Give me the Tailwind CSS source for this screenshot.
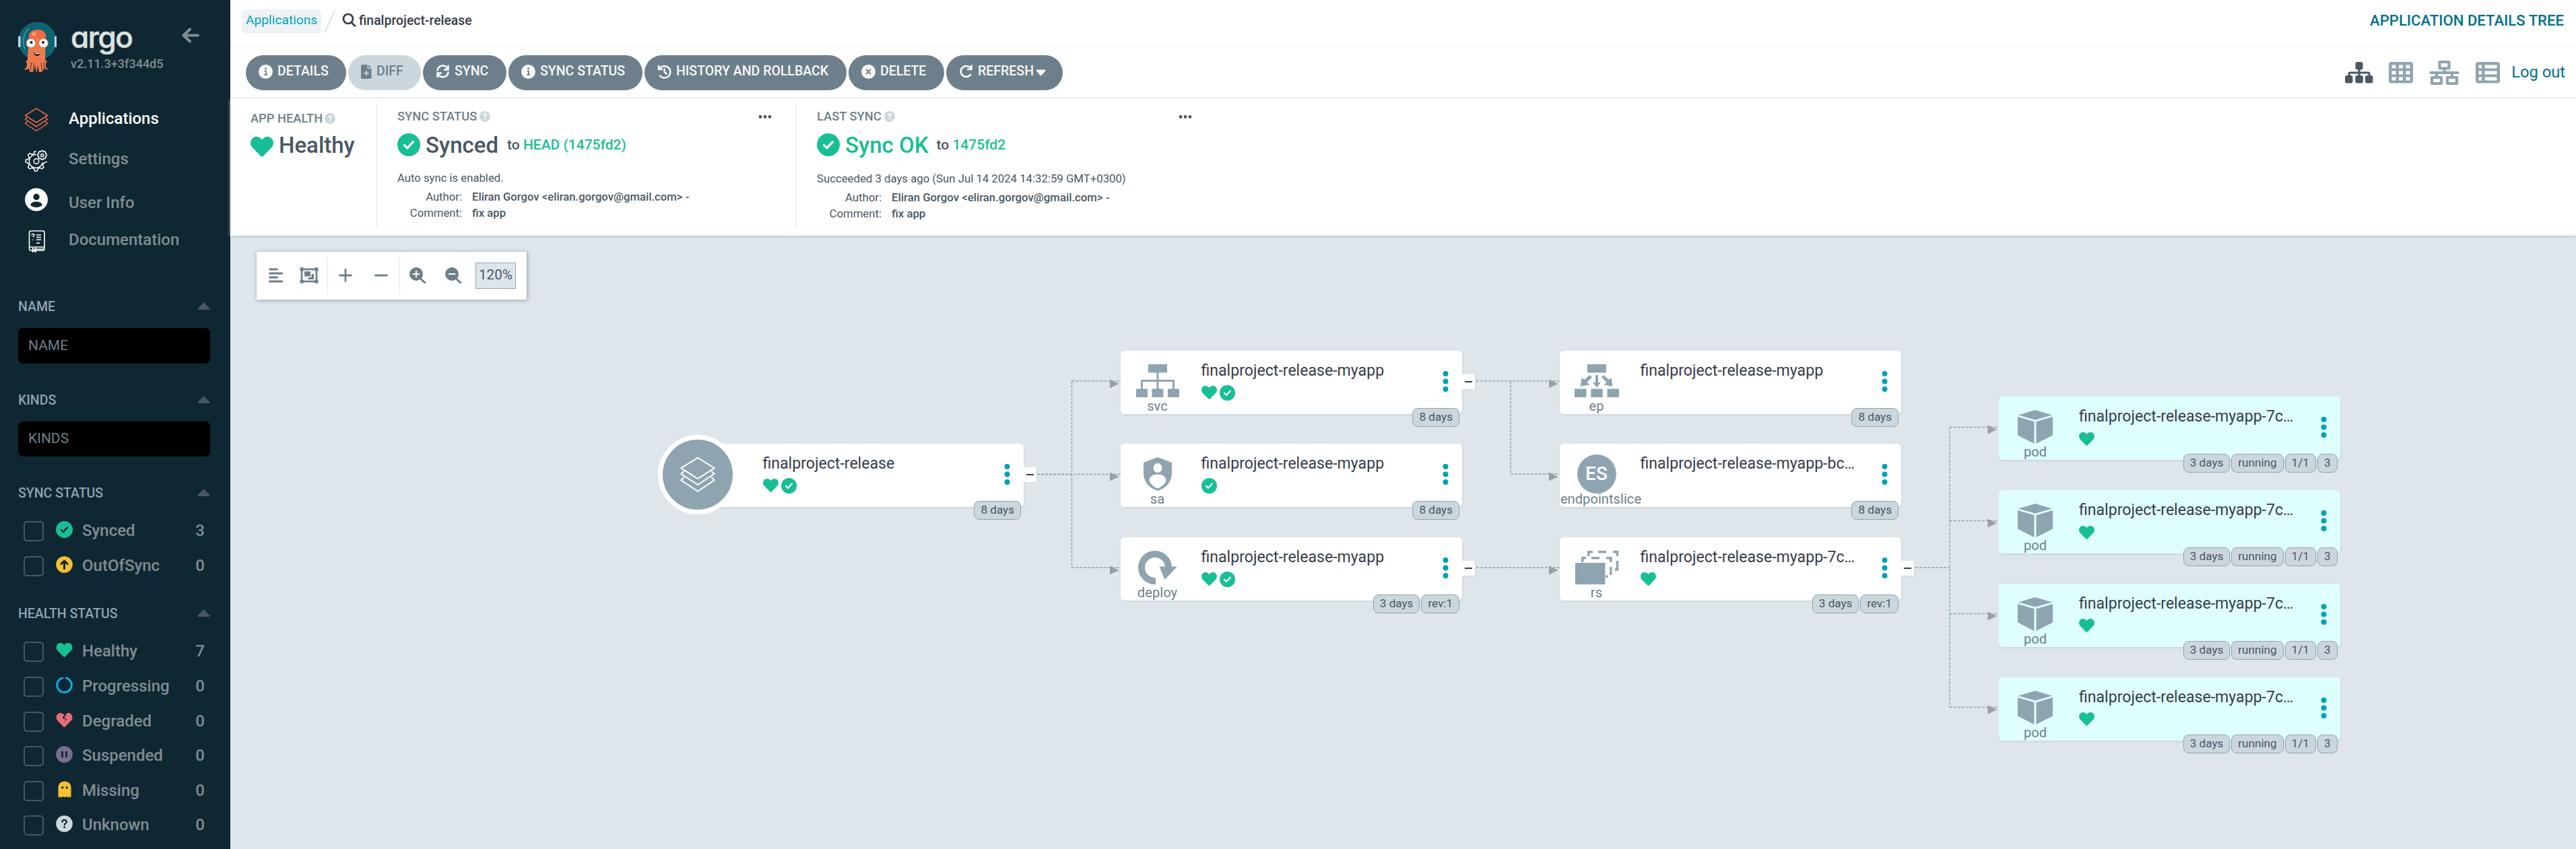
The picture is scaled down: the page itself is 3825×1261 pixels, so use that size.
<!DOCTYPE html>
<html lang="en">
<head>
<meta charset="utf-8">
<title>finalproject-release - Application Details Tree - Argo CD</title>
<script src="https://cdn.jsdelivr.net/npm/@tailwindcss/browser@4"></script>
</head>
<body class="flex h-[1261px] w-[3825px] overflow-hidden bg-[#dee6eb] font-['Roboto',sans-serif] text-[#363c4a]">

<!-- Icon sprite -->
<svg width="0" height="0" class="absolute">
  <defs>
    <symbol id="heart" viewBox="0 32 512 448"><path fill="currentColor" d="M462.3 62.6C407.5 15.9 326 24.3 275.7 76.2L256 96.5l-19.7-20.3C186.1 24.3 104.5 15.9 49.7 62.6c-62.8 53.6-66.1 149.8-9.9 207.9l193.5 199.8c12.5 12.9 32.8 12.9 45.3 0l193.5-199.8c56.3-58.1 53-154.3-9.8-207.9z"/></symbol>
    <symbol id="check" viewBox="0 0 24 24"><circle cx="12" cy="12" r="12" fill="currentColor"/><path d="M7.4 12.4l3.1 3.1 6-6.6" fill="none" stroke="var(--mark,#fff)" stroke-width="2.3" stroke-linecap="round" stroke-linejoin="round"/></symbol>
    <symbol id="info" viewBox="0 0 20 20"><circle cx="10" cy="10" r="10" fill="currentColor"/><circle cx="10" cy="5.8" r="1.4" fill="#6d7f8b"/><path d="M8.2 9.2H10.4V14M7.6 14.2h4.8" fill="none" stroke="#6d7f8b" stroke-width="1.8"/></symbol>
    <symbol id="times" viewBox="0 0 20 20"><circle cx="10" cy="10" r="10" fill="currentColor"/><path d="M7.2 7.2l5.6 5.6M12.8 7.2l-5.6 5.6" stroke="#6d7f8b" stroke-width="1.9" stroke-linecap="round"/></symbol>
    <symbol id="help" viewBox="0 0 16 16"><circle cx="8" cy="8" r="8" fill="#ccd6dd"/><path d="M5.9 6.2C6 4.8 7 4.3 8 4.3c1.200 0 2.200.7 2.200 1.900 0 1.500-2.100 1.500-2.100 3" fill="none" stroke="#fff" stroke-width="1.500" stroke-linecap="round"/><circle cx="8.100" cy="11.500" r="1" fill="#fff"/></symbol>
    <symbol id="layers" viewBox="0 0 36 36"><g fill="none" stroke="currentColor" stroke-linejoin="round"><path d="M18 1.200L34.500 11.500 18 22 1.500 11.500z"/><path d="M4.500 14.500L1.500 17.200 18 28 34.500 17.200l-3-2.700"/><path d="M4.500 20.500L1.500 23.500 18 34.500 34.500 23.500l-3-3"/></g></symbol>
    <symbol id="svc" viewBox="0 0 64 49"><g fill="#8fa4b1"><path d="M18 0h28v12.500H18zM0 36.500h17V49H0zM23.500 36.500h17V49h-17zM47 36.500h17V49H47z"/></g><path d="M32 12v25M8.500 37V24.500h47V37" fill="none" stroke="#8fa4b1" stroke-width="3"/></symbol>
    <symbol id="ep" viewBox="0 0 66 49"><g fill="#8fa4b1"><path d="M19 0h28v12.500H19zM0 36.500h17.500V49H0zM24.300 36.500h17.500V49H24.300zM48.500 36.500H66V49H48.500z"/><path d="M31 16h4v11h4l-6 7.500-6-7.500h4zM22.500 16l3.500 3-7.500 8 4 3.500-14 2.500 2-13 4 3zM43.500 16l-3.500 3 7.500 8-4 3.500 13 2.500-2-13-4 3z"/></g></symbol>
    <symbol id="sa" viewBox="0 0 42 50"><path fill="#8fa4b1" fill-rule="evenodd" d="M21 0L42 8v16c0 12-8 22-21 26C8 46 0 36 0 24V8zM21 9a6.500 7 0 1 0 0 14 6.500 7 0 1 0 0-14zM21 25.500c-8 0-12.500 4-12.500 9C10 40 15.500 44.500 21 46.500 26.500 44.500 32 40 33.500 34.500c0-5-4.500-9-12.500-9z"/></symbol>
    <symbol id="deploy" viewBox="0 0 58 51"><path d="M26 45A20 20 0 1 1 45 25" fill="none" stroke="#8fa4b1" stroke-width="10"/><path fill="#8fa4b1" d="M31.500 23.500H58L39.500 43z"/></symbol>
    <symbol id="rs" viewBox="0 0 66 50"><g fill="none" stroke="#8fa4b1" stroke-width="3.500"><path d="M20.700 8V1.700H27M35 1.700h12M57 1.700h6.500V8M63.500 15v13H60M11.700 17v-6.300H17M25 10.700h12M47 10.700h6.800V17M53.800 24v12M48 40v-3.500"/></g><path fill="#8fa4b1" d="M1 18h44.500v32H1z"/></symbol>
    <symbol id="pod" viewBox="0 0 52 50"><path fill="#8fa4b1" d="M26 0l25 7.500L26 14.500 1 7.500zM0 10l24.500 7.200V50L0 37.500zM52 10l-24.500 7.200V50L52 37.500z"/></symbol>
  </defs>
</svg>

<!-- Sidebar -->
<aside class="flex w-[342px] shrink-0 flex-col bg-[#0f2733]">
  <div class="flex h-[146px] items-start pl-[26px] pt-[32px]">
    <svg class="h-[77px] w-[59px]" viewBox="0 0 59 77">
      <circle cx="29.500" cy="29" r="27.500" fill="#0b6570" stroke="#1d5f7d" stroke-width="1.500"/>
      <path d="M1 22h3.500v16H1zM55 22h3v16h-3z" fill="#b9d6ea"/>
      <path d="M17 10C8 18 7 30 11 41" fill="none" stroke="#5aa0a2" stroke-width="1.300"/>
      <path d="M17 25C16 17 21 12 29.500 12S43 17 42 25l-1 28c0 5 1 6 4 6-2 1-3 2-3 4 0 5 1 7 4 8-4 .5-6-.5-7-2 0 3-1 5-3 6h-4l-2-10-1 10h-1l-2-10-2 10h-4c-3-1-3-3-3-6-1 2-4 3-8 2 4-1 5-4 5-8 0-2-1-3-3-4 3 0 4-1 4-6z" fill="#ef7b4d"/>
      <path d="M17.500 25C17 17 21 12 29.500 12S42.500 17 42 25z" fill="#ee6a45"/>
      <path d="M21 60l-2 13M25 61l-2 14M35 61l2 14M39 60l2 13" stroke="#0f2733" stroke-width=".8"/>
      <circle cx="24.500" cy="18.500" r="3" fill="#f79a7c"/>
      <circle cx="20" cy="32" r="7" fill="#fff" stroke="#e2573a"/><circle cx="38.500" cy="32" r="7" fill="#fff" stroke="#e2573a"/>
      <circle cx="20.500" cy="31" r="2" fill="#111"/><circle cx="38" cy="31" r="2" fill="#111"/>
      <path d="M24 46c4 1.500 7 1.500 10 0-.5 3.500-2.500 5-5 5s-4.500-2-5-5z" fill="#161616"/><path d="M25.500 46.500c3 1 5.500 1 8 0l-1 1.700h-6z" fill="#fff"/>
    </svg>
    <div class="ml-[19px] flex w-[165px] flex-col">
      <span class="mt-[-1px] h-[48px] pl-px text-[44px] leading-[48px] font-medium tracking-[-1.5px] text-[#dee0de] font-['Inter',sans-serif] [font-feature-settings:'cv11'] [-webkit-text-stroke:0.6px_#dee0de]">argo</span>
      <span class="mt-[3px] h-[26px] pl-px text-[18px] leading-[26px] font-medium text-[#818d94]">v2.11.3+3f344d5</span>
    </div>
    <svg class="mt-[9px] h-[24px] w-[28px]" viewBox="0 0 28 24" fill="none" stroke="#818d94" stroke-width="4" stroke-linecap="round" stroke-linejoin="round"><path d="M25 11.500H4M13 2.500L3.500 11.500 13 20.500"/></svg>
  </div>

  <nav class="flex flex-col text-[24px] font-medium text-[#818d94]">
    <a class="flex h-[60px] items-center pl-[36px] text-white"><svg class="mt-[3px] mr-[30px] h-[36px] w-[36px] stroke-[1.500] text-[#ef6a3f]"><use href="#layers"/></svg>Applications</a>
    <a class="flex h-[60px] items-center pl-[36px]">
      <svg class="mt-[3px] mr-[30px] h-[36px] w-[36px]" viewBox="0 0 36 36">
        <g fill="none" stroke="#fff" stroke-width="1.500" stroke-linejoin="round" stroke-linecap="round">
          <path d="M17 5.200l-1.500-.4-1.200 3.400-3 1.300L8 7.700 5.600 10.200l1.500 3.300-1.300 3-3.600 1v3.500l3.600 1.200 1.300 3L5.500 28.400 8 30.800l3.300-1.600 3 1.300 1.200 3.500H19l1.200-3.500 3-1.300 3.300 1.600 2.400-2.400-1.500-3.200 1.300-3 4.800-1.800"/>
          <path d="M17.500 9.500A10 10 0 1 0 27 22"/><circle cx="18" cy="19.500" r="3.800"/><circle cx="26.700" cy="10.700" r="2"/>
          <path d="M25.500 3.700h2.400l.6 1.900 1.900-.8 1.700 1.700-.8 1.900 2 .7v2.500l-2 .7.8 1.900-1.700 1.700-1.900-.8-.6 2h-2.400l-.8-2-1.900.8-1.700-1.700.8-1.900-2-.7V9.100l2-.7-.8-1.900 1.700-1.700 1.900.8z"/>
        </g>
      </svg>Settings</a>
    <a class="flex h-[60px] items-center pl-[36px]"><svg class="mr-[30px] h-[36px] w-[36px]" viewBox="0 0 36 36"><circle cx="18" cy="18.500" r="17" fill="#fff"/><circle cx="18" cy="14.500" r="4.700" fill="#0f2733"/><path d="M9 26.500c1.500-4 5-5 9-5s7.500 1 9 5c-2.500 2.500-5.500 3.500-9 3.500s-6.500-1-9-3.500z" fill="#0f2733"/></svg><span class="pt-[10px]">User Info</span></a>
    <a class="flex h-[60px] items-center pl-[36px]">
      <svg class="mt-[3px] mr-[30px] h-[36px] w-[36px]" viewBox="0 0 36 36" fill="none" stroke="#fff" stroke-width="1.600">
        <rect x="7.500" y="3" width="22.500" height="29" rx="2.500"/><path d="M8 27h22M12 30h17" /><path d="M18 9h7M18 12.500h7M18 16h7M18 21h5" stroke-width="1.500"/>
        <path d="M11.200 9.500c0-3 4-2.500 3.800-.2-.2 1.500-1.900 1.300-1.900 3M13 15.500v1.300M12.500 28v6l2.200-1.500L17 34v-6" stroke-width="1.500"/>
      </svg>Documentation</a>
  </nav>

  <div class="flex flex-col pl-[27px] pr-[30px] pt-[57px]">
    <div class="flex h-[24px] items-center justify-between pt-[1px] text-[19.500px] font-medium text-[#8fa4b1]">NAME<svg class="mb-[2px] h-[12px] w-[19px]" viewBox="0 0 19 12"><path d="M9.500 1.500L17.500 10H1.500z" fill="#495763" stroke="#495763" stroke-width="2" stroke-linejoin="round"/></svg></div>
    <div class="mt-[20px] flex h-[53px] items-center rounded-[7px] bg-black pl-[15px] text-[21px] text-[#6d7f8b]">NAME</div>
    <div class="mt-[42px] flex h-[24px] items-center justify-between pt-[1px] text-[19.500px] font-medium text-[#8fa4b1]">KINDS<svg class="mb-[2px] h-[12px] w-[19px]" viewBox="0 0 19 12"><path d="M9.500 1.500L17.500 10H1.500z" fill="#495763" stroke="#495763" stroke-width="2" stroke-linejoin="round"/></svg></div>
    <div class="mt-[20px] flex h-[52px] items-center rounded-[7px] bg-black pl-[15px] text-[21px] text-[#6d7f8b]">KINDS</div>
    <div class="mt-[42px] flex h-[24px] items-center justify-between pt-[1px] text-[19.500px] font-medium text-[#8fa4b1]">SYNC STATUS<svg class="mb-[2px] h-[12px] w-[19px]" viewBox="0 0 19 12"><path d="M9.500 1.500L17.500 10H1.500z" fill="#495763" stroke="#495763" stroke-width="2" stroke-linejoin="round"/></svg></div>
    <div id="sync-filters" class="mt-[18.500px] flex flex-col"></div>
    <div class="mt-[33.500px] flex h-[24px] items-center justify-between pt-[1px] text-[19.500px] font-medium text-[#8fa4b1]">HEALTH STATUS<svg class="mb-[2px] h-[12px] w-[19px]" viewBox="0 0 19 12"><path d="M9.500 1.500L17.500 10H1.500z" fill="#495763" stroke="#495763" stroke-width="2" stroke-linejoin="round"/></svg></div>
    <div id="health-filters" class="mt-[18.500px] flex flex-col"></div>
  </div>
</aside>

<main class="flex min-w-0 flex-1 flex-col">
  <!-- Breadcrumb bar -->
  <div class="flex h-[70px] shrink-0 items-start border-b border-[#eceeef] bg-white pl-[17px] pr-[18px] pt-[14px]">
    <a class="flex h-[36px] w-[118px] items-center rounded-[5px] bg-[#eff3f6] pl-[6px] pb-[3px] text-[19.200px] text-[#00a2b3]">Applications</a>
    <svg class="ml-[4px] h-[36px] w-[18px]" viewBox="0 0 18 36"><path d="M1.500 34L16.500 0" stroke="#ccd6dd" stroke-width="1.500"/></svg>
    <svg class="ml-[9px] mt-[5px] h-[22px] w-[21px]" viewBox="0 0 21 22" fill="none" stroke="#363c4a" stroke-width="2.700" stroke-linecap="round"><circle cx="9" cy="9" r="7"/><path d="M14 14.500l5 5"/></svg>
    <span class="ml-[4px] h-[33px] text-[19.400px] leading-[33px] font-medium">finalproject-release</span>
    <span class="ml-auto h-[33px] text-[22.100px] leading-[33px] font-medium text-[#006f8a]">APPLICATION DETAILS TREE</span>
  </div>

  <!-- Action bar -->
  <div class="flex h-[76px] shrink-0 items-center border-b border-[#eceeef] bg-white pl-[23px] pr-[16px]">
    <div class="flex gap-[3px] text-[19.500px] font-medium text-[#f8fafb]">
      <button class="flex h-[52px] w-[149px] items-center rounded-full bg-[#6d7f8b] pb-[3px] pl-[19px]"><svg class="mr-[7px] h-[21px] w-[21px]"><use href="#info"/></svg>DETAILS</button>
      <button class="flex h-[52px] w-[108px] items-center rounded-full bg-[#ccd6dd] pb-[3px] pl-[19px] text-[#6d7f8b]"><svg class="mr-[7px] h-[21px] w-[16px]" viewBox="0 0 16 21"><path d="M2 0h7.500v6h6V19a2 2 0 0 1-2 2H2a2 2 0 0 1-2-2V2a2 2 0 0 1 2-2zM11 0l4.500 4.500H11z" fill="#6d7f8b"/><path d="M8 9v7.500M4.200 12.700h7.500" stroke="#ccd6dd" stroke-width="1.800"/></svg>DIFF</button>
      <button class="flex h-[52px] w-[124px] items-center rounded-full bg-[#6d7f8b] pb-[3px] pl-[19px]"><svg class="mr-[7px] h-[20px] w-[21px]" viewBox="0 0 21 20" fill="none" stroke="#f8fafb" stroke-width="2.600" stroke-linecap="round" stroke-linejoin="round"><path d="M2.500 8.500A7.800 7.800 0 0 1 17 5.500l1 1.500M18.500 2v5.500H13M18.500 11.500A7.800 7.800 0 0 1 4 14.500L3 13M2.500 18v-5.500H8"/></svg>SYNC</button>
      <button class="flex h-[52px] w-[199px] items-center rounded-full bg-[#6d7f8b] pb-[3px] pl-[19px]"><svg class="mr-[7px] h-[21px] w-[21px]"><use href="#info"/></svg>SYNC STATUS</button>
      <button class="flex h-[52px] w-[300px] items-center rounded-full bg-[#6d7f8b] pb-[3px] pl-[19px]"><svg class="mr-[7px] h-[21px] w-[21px]" viewBox="0 0 21 21" fill="none" stroke="#f8fafb" stroke-width="2.500" stroke-linecap="round" stroke-linejoin="round"><path d="M3.500 6A8.700 8.700 0 1 1 4 16.500M2 2v5h5M10.700 6.500V11l3 2.500"/></svg>HISTORY AND ROLLBACK</button>
      <button class="flex h-[52px] w-[142px] items-center rounded-full bg-[#6d7f8b] pb-[3px] pl-[19px]"><svg class="mr-[7px] h-[21px] w-[21px]"><use href="#times"/></svg>DELETE</button>
      <button class="flex h-[52px] w-[173px] items-center rounded-full bg-[#6d7f8b] pb-[3px] pl-[19px]"><svg class="mr-[7px] h-[20px] w-[21px]" viewBox="0 0 21 20" fill="none" stroke="#f8fafb" stroke-width="2.700" stroke-linecap="round" stroke-linejoin="round"><path d="M17 15A8 8 0 1 1 17.500 6M18.500 1.500v5.500H13"/></svg>REFRESH<svg class="ml-[3px] mt-[3px] h-[10px] w-[15px]" viewBox="0 0 15 10"><path d="M1.500 1.500h12L7.500 8.500z" fill="#f8fafb" stroke="#f8fafb" stroke-width="2" stroke-linejoin="round"/></svg></button>
    </div>
    <div class="ml-auto flex items-center">
      <svg class="h-[32px] w-[42px]" viewBox="0 0 42 32"><g fill="#495763"><rect x="15.500" y="0" width="11" height="11.500" rx="3"/><rect x="0" y="20" width="11.500" height="11.500" rx="3"/><rect x="15.300" y="20" width="11.500" height="11.500" rx="3"/><rect x="30" y="20" width="11.500" height="11.500" rx="3"/></g><path d="M21 10v12M6 21v-3.500a1.500 1.500 0 0 1 1.500-1.500h27a1.500 1.500 0 0 1 1.500 1.500V21" fill="none" stroke="#495763" stroke-width="3"/></svg>
      <svg class="ml-[23px] h-[32px] w-[36px]" viewBox="0 0 36 32"><rect width="36" height="31.500" rx="4" fill="#8fa4b1"/><path fill="#fff" d="M4.500 4.500h6v5h-6zM15 4.500h6v5h-6zM25.500 4.500h6v5h-6zM4.500 13.500h6v5h-6zM15 13.500h6v5h-6zM25.500 13.500h6v5h-6zM4.500 22.500h6v5h-6zM15 22.500h6v5h-6zM25.500 22.500h6v5h-6z"/></svg>
      <svg class="ml-[24px] h-[38px] w-[45px]" viewBox="0 0 45 38" fill="none" stroke="#8fa4b1" stroke-width="4.200" stroke-linecap="round" stroke-linejoin="round"><path d="M15.500 3h14v9.500h-14zM4 26h14v9H4zM27 26h14v9H27z"/><path d="M2.500 19h40M22.500 13v6M11 19v6M34 19v6" /></svg>
      <svg class="ml-[24px] h-[32px] w-[36px]" viewBox="0 0 36 32"><rect width="36" height="31.500" rx="4" fill="#8fa4b1"/><path fill="#fff" d="M4.500 4.500h4.500v5H4.500zM13.500 4.500h18v5h-18zM4.500 13.500h4.500v5H4.500zM13.500 13.500h18v5h-18zM4.500 22.500h4.500v5H4.500zM13.500 22.500h18v5h-18z"/></svg>
      <span class="ml-[17px] text-[23.700px] text-[#006f8a]">Log out</span>
    </div>
  </div>

  <!-- Application summary -->
  <section class="relative flex h-[204px] shrink-0 bg-white pt-[6px] text-[#495763] shadow-[0_1px_4px_#b4c0c0]">
    <div class="flex h-[187px] w-[218px] flex-col border-r border-[#dee6eb] pl-[30px] pt-[12px]">
      <div class="flex h-[24px] items-center text-[18.300px] font-medium text-[#6d7f8b]">APP HEALTH<svg class="ml-[3px] h-[16px] w-[16px]"><use href="#help"/></svg></div>
      <div class="mt-[8px] flex h-[40px] items-center text-[33px] font-medium"><svg class="mr-[8px] mt-[3px] h-[30px] w-[34px] text-[#18be94]"><use href="#heart"/></svg>Healthy</div>
    </div>
    <div class="flex h-[187px] w-[623px] flex-col border-r border-[#dee6eb] pl-[30px] pt-[9px] text-[16.700px]">
      <div class="flex h-[24px] items-center pr-[36px] text-[18.300px] font-medium text-[#6d7f8b]">SYNC STATUS<svg class="ml-[4px] h-[16px] w-[16px]"><use href="#help"/></svg><svg class="ml-auto h-[5px] w-[20px]" viewBox="0 0 20 5" fill="#495763"><circle cx="3" cy="2.500" r="2.400"/><circle cx="10" cy="2.500" r="2.400"/><circle cx="17" cy="2.500" r="2.400"/></svg></div>
      <div class="mt-[11px] flex h-[40px] items-center text-[33px] font-medium"><svg class="mb-[3px] mr-[8px] h-[34px] w-[34px] text-[#18be94]"><use href="#check"/></svg>Synced<span class="ml-[13px] text-[21px]">to <span class="text-[#18be94]">HEAD (1475fd2)</span></span></div>
      <div class="mt-[17px] h-[24px] leading-[24px]">Auto sync is enabled.</div>
      <div class="mt-[4px] flex h-[24px] leading-[24px]"><span class="w-[96px] text-right">Author:</span><span class="ml-[15px] font-medium">Eliran Gorgov &lt;eliran.gorgov@gmail.com&gt; -</span></div>
      <div class="flex h-[24px] leading-[24px]"><span class="w-[96px] text-right">Comment:</span><span class="ml-[15px] font-medium">fix app</span></div>
    </div>
    <div class="flex h-[187px] w-[623px] flex-col pl-[30px] pt-[9px] text-[16.750px]">
      <div class="flex h-[24px] items-center pr-[36px] text-[18.300px] font-medium text-[#6d7f8b]">LAST SYNC<svg class="ml-[4px] h-[16px] w-[16px]"><use href="#help"/></svg><svg class="ml-auto h-[5px] w-[20px]" viewBox="0 0 20 5" fill="#495763"><circle cx="3" cy="2.500" r="2.400"/><circle cx="10" cy="2.500" r="2.400"/><circle cx="17" cy="2.500" r="2.400"/></svg></div>
      <div class="mt-[11px] flex h-[40px] items-center text-[33px] font-medium"><svg class="mb-[3px] mr-[8px] h-[34px] w-[34px] text-[#18be94]"><use href="#check"/></svg><span class="text-[#18be94]">Sync OK</span><span class="ml-[12px] text-[21px]">to <span class="text-[#18be94]">1475fd2</span></span></div>
      <div class="mt-[17px] h-[24px] leading-[24px]">Succeeded 3 days ago (Sun Jul 14 2024 14:32:59 GMT+0300)</div>
      <div class="mt-[4px] flex h-[24px] leading-[24px]"><span class="w-[96px] text-right">Author:</span><span class="ml-[15px] font-medium">Eliran Gorgov &lt;eliran.gorgov@gmail.com&gt; -</span></div>
      <div class="flex h-[24px] leading-[24px]"><span class="w-[96px] text-right">Comment:</span><span class="ml-[15px] font-medium">fix app</span></div>
    </div>
  </section>

  <!-- Resource tree -->
  <section class="relative flex-1">
    <div class="mt-[24px] ml-[39px] flex h-[71px] w-[401px] items-center bg-white pb-[1px] shadow-[1px_1px_5px_1px_#9fb2be] text-[#6d7f8b]">
      <svg class="ml-[18px] h-[24px] w-[22px]" viewBox="0 0 22 24" stroke="currentColor" stroke-width="2.800" stroke-linecap="round"><path d="M1.500 3h11M1.500 9h18.500M1.500 15h11M1.500 21h18.500"/></svg>
      <svg class="ml-[24px] h-[24px] w-[28px]" viewBox="0 0 28 24"><rect x="3" y="3" width="22" height="18" fill="none" stroke="currentColor" stroke-width="2.700"/><g fill="currentColor"><circle cx="3.200" cy="3" r="2.900"/><circle cx="24.800" cy="3" r="2.900"/><circle cx="3.200" cy="21" r="2.900"/><circle cx="24.800" cy="21" r="2.900"/><rect x="7" y="6" width="9" height="7.500" rx="1"/><path d="M17.500 10H21v8h-8.500v-3h4a1 1 0 0 0 1-1z"/></g></svg>
      <div class="ml-[13px] h-[53px] w-px bg-[#dee6eb]"></div>
      <svg class="ml-[16px] h-[20px] w-[20px]" viewBox="0 0 20 20" stroke="currentColor" stroke-width="2.800" stroke-linecap="round"><path d="M10 1.500v17M1.500 10h17"/></svg>
      <svg class="ml-[33px] h-[20px] w-[20px]" viewBox="0 0 20 20" stroke="currentColor" stroke-width="2.800" stroke-linecap="round"><path d="M1.500 10h17"/></svg>
      <div class="ml-[17px] h-[53px] w-px bg-[#dee6eb]"></div>
      <svg class="ml-[14px] h-[24px] w-[25px]" viewBox="0 0 25 24"><circle cx="10" cy="10" r="10" fill="currentColor"/><path d="M16 16.500l7 6.500" stroke="currentColor" stroke-width="3" stroke-linecap="round"/><path d="M10 5.500v9M5.500 10h9" stroke="#fff" stroke-width="1.800" stroke-linecap="round"/></svg>
      <svg class="ml-[28px] h-[24px] w-[25px]" viewBox="0 0 25 24"><circle cx="10" cy="10" r="10" fill="currentColor"/><path d="M16 16.500l7 6.500" stroke="currentColor" stroke-width="3" stroke-linecap="round"/><path d="M5.500 10h9" stroke="#fff" stroke-width="1.800" stroke-linecap="round"/></svg>
      <div class="ml-[20px] flex h-[39px] w-[60px] items-center justify-center border border-[#8fa4b1] bg-[#dee6eb] pb-[1px] text-[20.700px] text-[#495763]">120%</div>
    </div>
    <svg id="edges" class="absolute left-0 top-0 h-[911px] w-[3483px]" viewBox="342 350 3483 911"></svg>
    <div id="nodes"></div>
  </section>
</main>

<script>
  // Sidebar filter rows
  const filterIcons = {
    synced: '<svg class="h-[25px] w-[25px] text-[#18be94] [--mark:#0f2733]"><use href="#check"/></svg>',
    outofsync: '<svg class="h-[25px] w-[25px]" viewBox="0 0 25 25"><circle cx="12.5" cy="12.5" r="12.300" fill="#f4c030"/><path d="M12.500 18.500V8M8 11.500l4.500-4.500 4.500 4.500" fill="none" stroke="#0f2733" stroke-width="3" stroke-linecap="round" stroke-linejoin="round"/></svg>',
    healthy: '<svg class="h-[21px] w-[25px] text-[#18be94]"><use href="#heart"/></svg>',
    progressing: '<svg class="h-[25px] w-[25px]" viewBox="0 0 25 25"><path d="M9.800 2.100A10.800 10.800 0 1 0 15.200 2.100" fill="none" stroke="#0dadea" stroke-width="3" stroke-linecap="round"/></svg>',
    degraded: '<svg class="h-[21px] w-[25px] text-[#e96d76]" viewBox="0 0 25 21"><use href="#heart" width="25" height="21"/><path d="M14.500 0L9.500 7.500l5 2-2 5 3.500-5.500-4-2 4-5.500z" fill="#0f2733"/></svg>',
    suspended: '<svg class="h-[25px] w-[25px]" viewBox="0 0 25 25"><circle cx="12.500" cy="12.500" r="12.300" fill="#766f94"/><path d="M9.500 9v7M15.500 9v7" stroke="#0f2733" stroke-width="2.800" stroke-linecap="round"/></svg>',
    missing: '<svg class="h-[25px] w-[20px]" viewBox="0 0 20 25"><path d="M.5 10C.5 4 4.500.5 10 .5S19.500 4 19.500 10v14.500l-2-1-2.500 1-2.500-1.500L10 24.500 7.500 23 5 24.500l-2.500-1-2 1z" fill="#f4c030"/><circle cx="6.800" cy="9.800" r="1.700" fill="#0f2733"/><circle cx="13.200" cy="9.800" r="1.700" fill="#0f2733"/></svg>',
    unknown: '<svg class="h-[25px] w-[25px]" viewBox="0 0 25 25"><circle cx="12.500" cy="12.500" r="12.300" fill="#ccd6dd"/><path d="M9.300 9.800c.2-2.300 1.800-3 3.300-3 1.800 0 3.300 1 3.300 2.800 0 2.300-3.100 2.200-3.100 4.500" fill="none" stroke="#0f2733" stroke-width="2.200" stroke-linecap="round"/><circle cx="12.700" cy="17.600" r="1.500" fill="#0f2733"/></svg>'
  };
  const filterRow = ([key, label, count]) => `
    <div class="flex h-[51.600px] items-center pl-[8px] pr-[8px] text-[24px] font-medium text-[#818d94]">
      <span class="mt-[2px] h-[30px] w-[30px] rounded-[5px] border-2 border-[#495763]"></span>
      <span class="mb-[3px] ml-[18px] flex w-[25px] justify-center">${filterIcons[key]}</span>
      <span class="ml-[14px]">${label}</span><span class="ml-auto">${count}</span>
    </div>`;
  document.getElementById('sync-filters').innerHTML = [['synced', 'Synced', 3], ['outofsync', 'OutOfSync', 0]].map(filterRow).join('');
  document.getElementById('health-filters').innerHTML = [['healthy', 'Healthy', 7], ['progressing', 'Progressing', 0], ['degraded', 'Degraded', 0], ['suspended', 'Suspended', 0], ['missing', 'Missing', 0], ['unknown', 'Unknown', 0]].map(filterRow).join('');

  // Tree nodes: canvas coordinates of each card's top left corner
  const X = [1013, 1664, 2316, 2967.5];
  const N = 'finalproject-release-myapp';
  const nodes = [
    { x: X[0], y: 658.5, root: true, name: 'finalproject-release', heart: 1, check: 1, badges: ['8 days'], toggle: 1 },
    { x: X[1], y: 520.5, kind: 'svc', iw: 64, ih: 49, name: N, heart: 1, check: 1, badges: ['8 days'], toggle: 1 },
    { x: X[1], y: 658.5, kind: 'sa', iw: 42, ih: 50, name: N, check: 1, badges: ['8 days'] },
    { x: X[1], y: 797.5, kind: 'deploy', iw: 58, ih: 51, name: N, heart: 1, check: 1, badges: ['3 days', 'rev:1'], toggle: 1 },
    { x: X[2], y: 520.5, kind: 'ep', iw: 66, ih: 49, name: N, badges: ['8 days'] },
    { x: X[2], y: 658.5, kind: 'endpointslice', name: N + '-bc…', badges: ['8 days'] },
    { x: X[2], y: 797.5, kind: 'rs', iw: 66, ih: 50, name: N + '-7c…', heart: 1, badges: ['3 days', 'rev:1'], toggle: 1 },
    ...[589, 728, 866.5, 1005.500].map(y => ({ x: X[3], y, kind: 'pod', pod: 1, iw: 52, ih: 50, name: N + '-7c…', heart: 1, badges: ['3 days', 'running', '1/1', '3'] }))
  ];
  const kindIcon = n => n.kind === 'endpointslice'
    ? '<div class="mt-[-4px] flex h-[58px] w-[58px] items-center justify-center rounded-full bg-[#8fa4b1] text-[28px] font-medium text-white">ES</div>'
    : `<svg width="${n.iw}" height="${n.ih}" class="shrink-0"><use href="#${n.kind}"/></svg>`;
  document.getElementById('nodes').innerHTML = nodes.map(n => `
    <div class="absolute h-[94px] w-[507px] rounded-[6px] shadow-[1px_2px_3px_#ccd6dd] ${n.pod ? 'bg-[#dfffff]' : 'bg-white'}" style="left:${n.x - 342}px;top:${n.y - 350}px">
      ${n.root
        ? '<div class="absolute left-[-36px] top-[-13px] flex h-[118px] w-[118px] items-center justify-center rounded-full border-[7px] border-white bg-[#8fa4b1]"><svg class="h-[54px] w-[54px] stroke-[1.300] text-white"><use href="#layers"/></svg></div>'
        : `<div class="absolute left-0 top-[20px] flex w-[109px] flex-col items-center"><div class="flex h-[50px] items-start justify-center">${kindIcon(n)}</div><span class="h-[24px] text-[20.200px] leading-[24px] text-[#6d7f8b] ${n.kind.length > 8 ? 'ml-[13px]' : ''}">${n.kind}</span></div>`}
      <div class="flex h-full pl-[119.500px] pt-[15px]">
        <div class="flex flex-col"><span class="h-[30px] text-[23.100px] leading-[30px] whitespace-nowrap">${n.name}</span>
          <div class="mt-[6px] flex h-[23px] items-center gap-[4px] text-[#18be94]">
            ${n.heart ? '<svg class="h-[20px] w-[23px]"><use href="#heart"/></svg>' : ''}${n.check ? '<svg class="h-[23px] w-[23px]"><use href="#check"/></svg>' : ''}
          </div></div>
      </div>
      <svg class="absolute right-[20px] top-[29px] h-[33px] w-[9px]" viewBox="0 0 9 33" fill="#00a2b3"><circle cx="4.500" cy="5" r="4"/><circle cx="4.500" cy="16.500" r="4"/><circle cx="4.500" cy="28" r="4"/></svg>
      ${n.toggle ? '<div class="absolute left-[507px] top-[35px] flex h-[22px] w-[19px] items-center justify-center bg-white shadow-[1px_1px_2px_#ccd6dd]"><span class="h-[2px] w-[11px] bg-[#363c4a]"></span></div>' : ''}
      <div class="absolute right-[4px] top-[85px] flex gap-[2px] text-[17.100px] text-[#495763]">
        ${n.badges.map(b => `<span class="flex h-[28px] items-center rounded-[8px] border border-[#8fa4b1] bg-[#ccd6dd] px-[9px] whitespace-nowrap">${b}</span>`).join('')}
      </div>
    </div>`).join('');

  // Dashed connectors and arrow heads
  const lines = [
    [1540, 704.5, 1664, 704.5], [1540, 704.5, 1591.500, 704.5], [1591.500, 566, 1591.500, 843],
    [1591.500, 566, 1664, 566], [1591.500, 843, 1664, 843],
    [2192, 566, 2316, 566], [2243, 566, 2243, 704], [2243, 704, 2316, 704], [2192, 843, 2316, 843],
    [2844, 843, 2895, 843], [2895, 634.5, 2895, 1051],
    [2895, 634.5, 2967, 634.5], [2895, 773.5, 2967, 773.5], [2895, 911.5, 2967, 911.5], [2895, 1050.500, 2967, 1050.500]
  ];
  const arrows = [[1648, 570], [1648, 708], [1648, 847], [2300, 570], [2300, 708], [2300, 847], [2951.500, 638], [2951.500, 777], [2951.500, 915], [2951.500, 1054]];
  document.getElementById('edges').innerHTML =
    lines.map(([a, b, c, d]) => `<path d="M${a} ${b}L${c} ${d}" stroke="#8fa4b1" stroke-width="${b === d ? 1.700 : 1.400}" stroke-dasharray="4 2" fill="none"/>`).join('') +
    arrows.map(([x, y]) => `<path d="M${x} ${y - 6.500}v13l13.500-6.500z" fill="#9c9fa2"/>`).join('');
</script>
</body>
</html>
